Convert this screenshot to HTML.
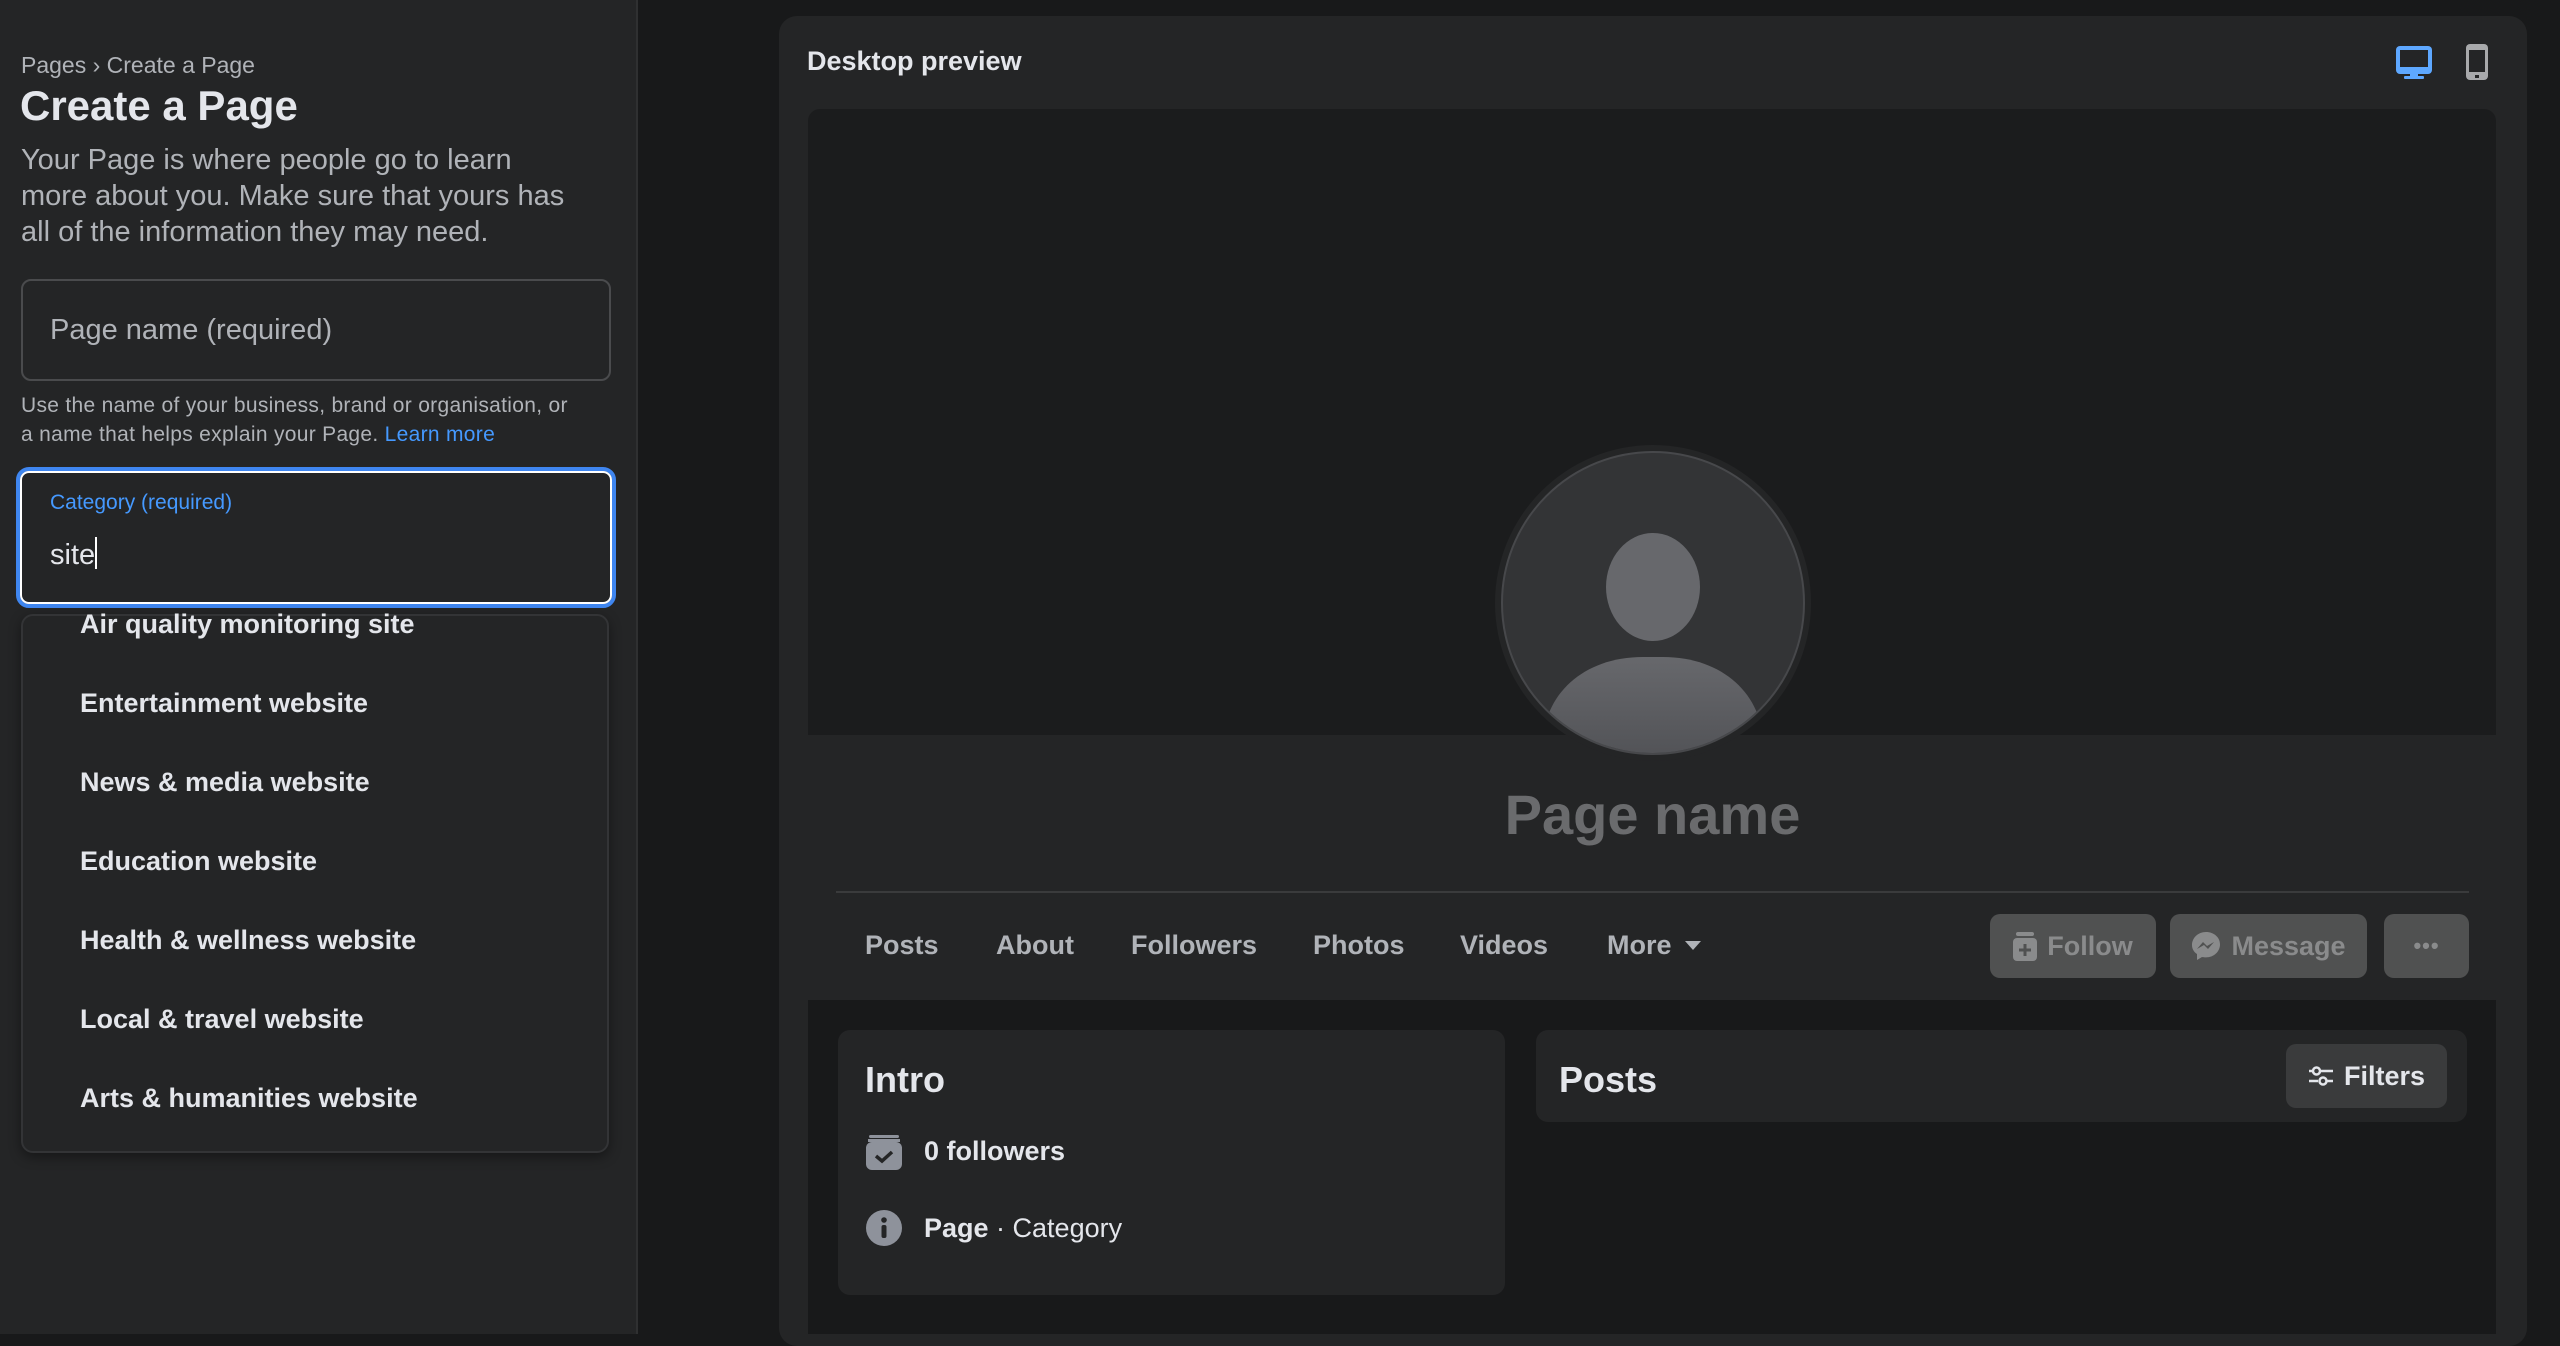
<!DOCTYPE html>
<html><head><meta charset="utf-8"><style>
*{box-sizing:border-box;margin:0;padding:0}
body{width:2560px;height:1334px;background:#18191a;font-family:"Liberation Sans",sans-serif;position:relative;overflow:hidden;color:#e4e6eb}
.a{position:absolute;white-space:nowrap}
#left{position:absolute;left:0;top:0;width:638px;height:1334px;background:#242526;border-right:2px solid #2f3031}
.item{position:absolute;left:80px;font-size:27px;font-weight:bold;color:#e4e6eb}
.tab{position:absolute;top:930px;font-size:27px;font-weight:bold;color:#b0b3b8}
.btn{position:absolute;top:914px;height:64px;background:#505151;border-radius:10px;color:#8a8b8c;font-size:27px;font-weight:bold;display:flex;align-items:center;justify-content:center;gap:10px}
</style></head><body>
<div id="left">
 <div class="a" style="left:21px;top:52px;font-size:23px;color:#b0b3b8">Pages › Create a Page</div>
 <div class="a" style="left:20px;top:82px;font-size:42px;font-weight:bold;color:#e4e6eb">Create a Page</div>
 <div class="a" style="left:21px;top:142px;font-size:29px;line-height:36px;color:#b0b3b8">Your Page is where people go to learn<br>more about you. Make sure that yours has<br>all of the information they may need.</div>
 <div class="a" style="left:21px;top:279px;width:590px;height:102px;border:2px solid #4a4b4d;border-radius:10px"></div>
 <div class="a" style="left:50px;top:314px;font-size:29px;color:#b0b3b8">Page name (required)</div>
 <div class="a" style="left:21px;top:391px;font-size:21px;line-height:29px;color:#b0b3b8;letter-spacing:0.3px">Use the name of your business, brand or organisation, or<br>a name that helps explain your Page. <span style="color:#4599ff">Learn more</span></div>
 <div class="a" style="left:16px;top:467px;width:600px;height:141px;border:4px solid #3f86f0;border-radius:13px"><div style="position:absolute;inset:0;border:2px solid #fff;border-radius:9px"></div></div>
 <div class="a" style="left:50px;top:491px;font-size:21px;color:#4599ff">Category (required)</div>
 <div class="a" style="left:50px;top:537px;font-size:29px;color:#e4e6eb">site<span style="display:inline-block;width:2px;height:32px;background:#fff;vertical-align:-5px"></span></div>
 <div class="a" style="left:21px;top:614px;width:588px;height:539px;background:#242526;border:2px solid #333436;border-radius:12px;box-shadow:0 4px 12px rgba(0,0,0,.4);overflow:hidden">
 </div>
 <div class="item" style="top:609px">Air quality monitoring site</div>
 <div class="item" style="top:688px">Entertainment website</div>
 <div class="item" style="top:767px">News &amp; media website</div>
 <div class="item" style="top:846px">Education website</div>
 <div class="item" style="top:925px">Health &amp; wellness website</div>
 <div class="item" style="top:1004px">Local &amp; travel website</div>
 <div class="item" style="top:1083px">Arts &amp; humanities website</div>
</div>

<div class="a" style="left:779px;top:16px;width:1748px;height:1330px;background:#242526;border-radius:18px"></div>
<div class="a" style="left:807px;top:46px;font-size:27px;font-weight:bold;color:#e4e6eb">Desktop preview</div>
<svg class="a" style="left:2394px;top:44px" width="40" height="36" viewBox="0 0 40 36"><rect x="2" y="2" width="36" height="28" rx="4" fill="#5ea8ff"/><rect x="6" y="6" width="28" height="17" fill="#242526"/><rect x="16" y="28" width="8" height="5" fill="#5ea8ff"/><rect x="10" y="32" width="20" height="3" rx="1" fill="#5ea8ff"/></svg>
<svg class="a" style="left:2465px;top:43px" width="24" height="38" viewBox="0 0 24 38"><rect x="1" y="1" width="22" height="36" rx="4" fill="#a8a9ab"/><rect x="4" y="7" width="16" height="22" fill="#242526"/><rect x="10" y="32" width="4" height="3" fill="#242526"/></svg>

<div class="a" style="left:808px;top:109px;width:1688px;height:626px;background:#1b1c1d;border-radius:12px 12px 0 0"></div>
<div class="a" style="left:808px;top:1000px;width:1688px;height:334px;background:#18191a"></div>

<svg class="a" style="left:1493px;top:445px" width="320" height="320" viewBox="0 0 320 320">
 <defs><clipPath id="c"><circle cx="160" cy="158" r="150"/></clipPath><linearGradient id="g" x1="0" y1="0" x2="0" y2="1"><stop offset="0" stop-color="#67686c"/><stop offset="1" stop-color="#4e4f53"/></linearGradient></defs>
 <circle cx="160" cy="158" r="158" fill="#242526"/>
 <circle cx="160" cy="158" r="151" fill="#333436" stroke="#47484b" stroke-width="2"/>
 <g clip-path="url(#c)"><ellipse cx="160" cy="142" rx="47" ry="54" fill="#67686c"/><path d="M50 330 L50 300 C50 250 90 212 150 212 L170 212 C230 212 270 250 270 300 L270 330 Z" fill="url(#g)"/></g>
</svg>
<div class="a" style="left:0;width:3305px;text-align:center;top:782px;font-size:56px;font-weight:bold;color:#6a6b6d">Page name</div>
<div class="a" style="left:836px;top:891px;width:1633px;height:2px;background:#3a3b3c"></div>

<div class="tab" style="left:865px">Posts</div>
<div class="tab" style="left:996px">About</div>
<div class="tab" style="left:1131px">Followers</div>
<div class="tab" style="left:1313px">Photos</div>
<div class="tab" style="left:1460px">Videos</div>
<div class="tab" style="left:1607px">More <span style="display:inline-block;width:0;height:0;border-left:8px solid transparent;border-right:8px solid transparent;border-top:9px solid #b0b3b8;vertical-align:4px;margin-left:6px"></span></div>

<div class="btn" style="left:1990px;width:166px"><svg width="24" height="30" viewBox="0 0 24 30"><rect x="0" y="7" width="24" height="23" rx="4" fill="#8a8b8c"/><rect x="3" y="1" width="18" height="4" rx="2" fill="#8a8b8c"/><path d="M12 13v12M6 19h12" stroke="#505151" stroke-width="3"/></svg>Follow</div>
<div class="btn" style="left:2170px;width:197px"><svg width="30" height="30" viewBox="0 0 30 30"><path d="M15 1C7 1 1 7 1 14c0 4 2 7 5 9v6l5-3c1 .3 2.5 .4 4 .4 8 0 14-6 14-13S23 1 15 1z" fill="#8a8b8c"/><path d="M6 18l6-7 4 4 7-4-6 7-4-4z" fill="#505151"/></svg>Message</div>
<div class="btn" style="left:2384px;width:85px;font-size:22px;letter-spacing:1px">•••</div>

<div class="a" style="left:838px;top:1030px;width:667px;height:265px;background:#242526;border-radius:12px"></div>
<div class="a" style="left:865px;top:1059px;font-size:36px;font-weight:bold;color:#e4e6eb">Intro</div>
<svg class="a" style="left:866px;top:1134px" width="36" height="36" viewBox="0 0 36 36"><rect x="0" y="8" width="36" height="28" rx="6" fill="#8e929b"/><rect x="3" y="1" width="30" height="3" rx="1.5" fill="#8e929b"/><rect x="2" y="5" width="32" height="3" fill="#8e929b"/><path d="M10 22l6 5 10-9" stroke="#242526" stroke-width="3.5" fill="none"/></svg>
<div class="a" style="left:924px;top:1136px;font-size:27px;font-weight:bold;color:#e4e6eb">0 followers</div>
<svg class="a" style="left:866px;top:1210px" width="36" height="36" viewBox="0 0 36 36"><circle cx="18" cy="18" r="18" fill="#8e929b"/><circle cx="18" cy="10" r="2.8" fill="#242526"/><rect x="15.5" y="15" width="5" height="13" rx="2" fill="#242526"/></svg>
<div class="a" style="left:924px;top:1213px;font-size:27px;color:#e4e6eb"><b>Page</b> · Category</div>

<div class="a" style="left:1536px;top:1030px;width:931px;height:92px;background:#242526;border-radius:12px"></div>
<div class="a" style="left:1559px;top:1059px;font-size:36px;font-weight:bold;color:#e4e6eb">Posts</div>
<div class="a" style="left:2286px;top:1044px;width:161px;height:64px;background:#3a3b3c;border-radius:10px;display:flex;align-items:center;justify-content:center;gap:10px;font-size:27px;font-weight:bold;color:#e4e6eb"><svg width="26" height="22" viewBox="0 0 26 22"><path d="M1 6h3M13 6h12M1 16h9M19 16h6" stroke="#e4e6eb" stroke-width="2.5"/><circle cx="8.5" cy="6" r="3.5" fill="none" stroke="#e4e6eb" stroke-width="2.5"/><circle cx="15" cy="16" r="3.5" fill="none" stroke="#e4e6eb" stroke-width="2.5"/></svg>Filters</div>
</body></html>
